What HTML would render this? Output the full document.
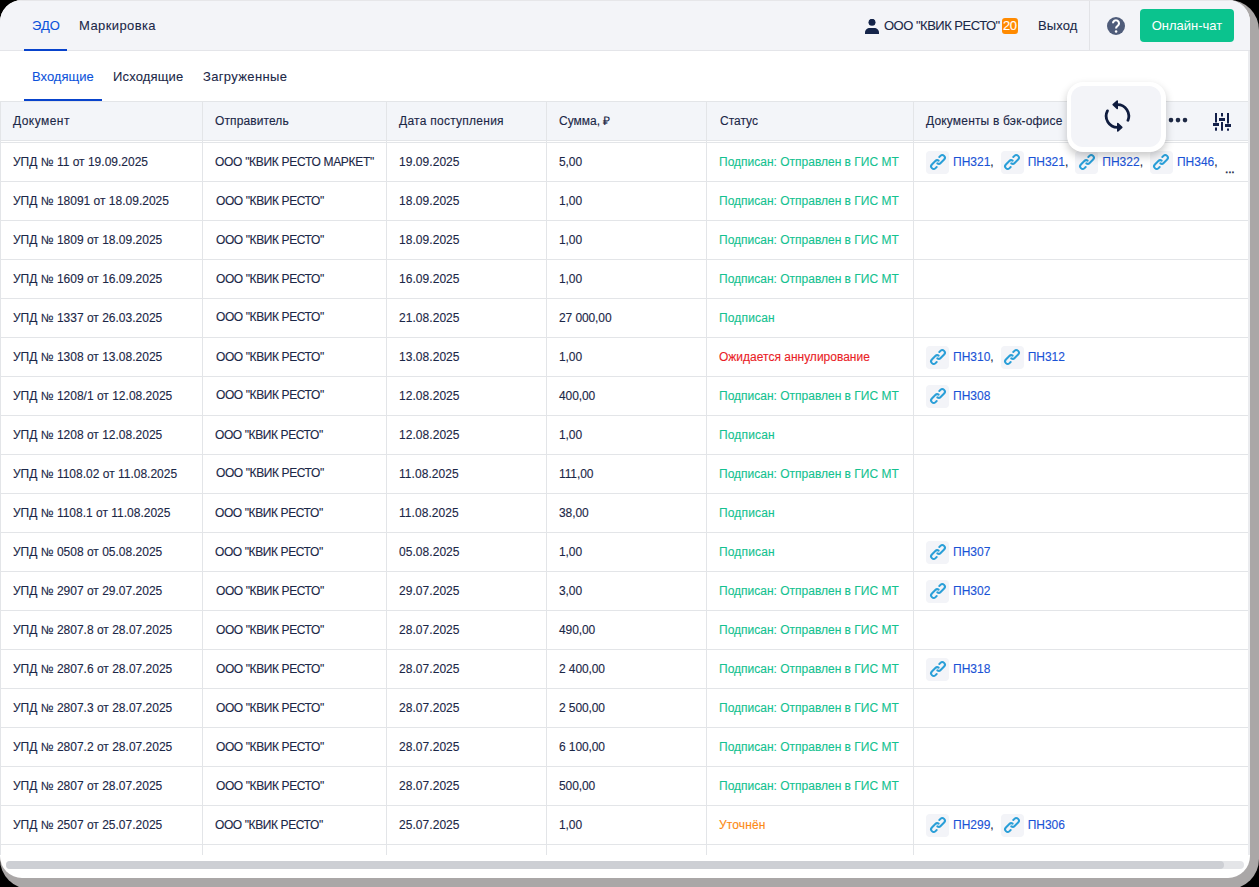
<!DOCTYPE html>
<html><head><meta charset="utf-8">
<style>
*{margin:0;padding:0;box-sizing:border-box}
html,body{width:1259px;height:887px;overflow:hidden;background:#000}
body{font-family:"Liberation Sans",sans-serif;color:#1b2747;position:relative;-webkit-text-stroke:0.12px currentColor}
#shadow{position:absolute;left:0;top:0;width:1259px;height:889px;border-radius:30px;background:#aaa7a7}
#win{position:absolute;left:0;top:0;width:1250px;height:878px;border-radius:22px;overflow:hidden;background:#fff}
#nav{position:absolute;left:0;top:0;width:1250px;height:51px;background:#f3f4f8;border-bottom:1px solid #e4e5e9}
#topline{position:absolute;left:0;top:0;width:1250px;height:1px;background:#e6e6e9}
.t13{position:absolute;font-size:13px;line-height:16px;white-space:nowrap;-webkit-text-stroke:0.08px currentColor}
.ul{position:absolute;height:2px;background:#0843cc}
#divider{position:absolute;left:1089px;top:0;width:1px;height:50px;background:#e2e3e7}
#chat{position:absolute;left:1140px;top:9px;width:94px;height:33px;border-radius:4px;background:#0bc38e;color:#fff;-webkit-text-stroke:0;font-size:13px;line-height:33px;text-align:center}
#badge{position:absolute;left:1002px;top:18px;width:16px;height:16px;border-radius:3px;background:#ff8a00;color:#fff;font-size:13px;line-height:15px;text-align:center;letter-spacing:-0.6px;text-indent:-0.5px}
#tbl{position:absolute;left:0;top:101px;width:1250px;height:760px}
.hbg{position:absolute;left:0;top:1px;width:1250px;height:38px;background:#f3f5f9}
.hl{position:absolute;left:0;width:1248px;height:1px;background:#e3e5e8}
.vl{position:absolute;top:0;width:1px;height:754px;background:#e3e5e8}
.row{position:absolute;left:0;width:1248px;height:39px;border-bottom:1px solid #e3e5e8}
.c{position:absolute;top:0;height:38px;line-height:38px;font-size:12px;white-space:nowrap}
.hc{position:absolute;top:1px;height:38px;line-height:38px;font-size:12px;white-space:nowrap}
.st-g{color:#14c290}
.ls15{letter-spacing:0.15px}
.st-r{color:#ea1d27}
.st-o{color:#fc8a14;letter-spacing:0.15px}
.links{display:flex;align-items:center;height:38px}
.chip{display:inline-flex;align-items:center;margin-right:7px}
.snd{letter-spacing:-0.4px}
.snd1{letter-spacing:-0.3px}
.dt{letter-spacing:0.05px}
.sm{letter-spacing:-0.1px}
.blue{color:#0c52db}
.ib{display:inline-block;width:23px;height:23px;border-radius:4px;background:#f3f4f8;margin-right:4px;padding-left:0.5px}
.ib svg{display:block}
.lt{color:#1a53d6}
.cm{color:#1b2747}
.more{position:absolute;left:299px;top:19px;font-size:12px;line-height:14px;letter-spacing:-0.2px;-webkit-text-stroke:0.4px currentColor}
#sb-track{position:absolute;left:6px;top:861px;width:1238px;height:8px;border-radius:4px;background:#e4e5e8}
#sb-thumb{position:absolute;left:6px;top:861px;width:1218px;height:8px;border-radius:4px;background:#cdcfd4}
#refresh{position:absolute;left:1067px;top:82px;width:99px;height:70px;border-radius:16px;background:#fff;box-shadow:0 4px 9px rgba(0,0,0,0.22)}
#refresh-in{position:absolute;left:4px;top:4px;width:90px;height:61px;border-radius:12px;background:#f3f4f8}
</style></head><body>
<div id="shadow"></div>
<div id="win">
  <div id="nav">
    <div class="t13 blue" style="left:32px;top:18px">ЭДО</div>
    <div class="ul" style="left:24px;top:49px;width:43px"></div>
    <div class="t13" style="left:79px;top:18px;letter-spacing:0.4px">Маркировка</div>
    <svg style="position:absolute;left:864px;top:19px" width="16" height="16" viewBox="0 0 16 16">
      <circle cx="8" cy="3.3" r="3.5" fill="#14244a"/>
      <path d="M1 14.9 v-1.3 c0-2.6 2.2-4.5 4.8-4.5 h4.4 c2.6 0 4.8 1.9 4.8 4.5 v1.3 z" fill="#14244a"/>
    </svg>
    <div class="t13" style="left:884px;top:18px;letter-spacing:-0.5px">ООО "КВИК РЕСТО"</div>
    <div id="badge">20</div>
    <div class="t13" style="left:1038px;top:18px;letter-spacing:0.1px">Выход</div>
    <div id="divider"></div>
    <svg style="position:absolute;left:1107px;top:16.8px" width="18" height="18" viewBox="0 0 18 18">
      <circle cx="9" cy="9" r="9" fill="#4f5c7a"/>
      <path d="M6.0 6.3 A3.0 3.0 0 1 1 10.6 8.8 Q9.1 9.7 9.1 11.2 L9.1 11.6" fill="none" stroke="#fff" stroke-width="2.1" stroke-linecap="butt"/>
      <circle cx="9.1" cy="14.6" r="1.25" fill="#fff"/>
    </svg>
    <div id="chat">Онлайн-чат</div>
    <div id="topline"></div>
  </div>
  <div class="t13 blue" style="left:32px;top:69px">Входящие</div>
  <div class="t13" style="left:113px;top:69px;letter-spacing:0.15px">Исходящие</div>
  <div class="t13" style="left:203px;top:69px;letter-spacing:0.35px">Загруженные</div>
  <div class="ul" style="left:24px;top:99px;width:78px"></div>

  <div id="tbl">
    <div class="hbg"></div>
    <div class="hl" style="top:0"></div>
    <div class="hl" style="top:39px"></div>
    <div class="hl" style="top:41px"></div>
    <div class="hc" style="left:13px;letter-spacing:0.45px">Документ</div>
    <div class="hc" style="left:215px;letter-spacing:0.1px">Отправитель</div>
    <div class="hc" style="left:399px;letter-spacing:0.26px">Дата поступления</div>
    <div class="hc" style="left:559px">Сумма, ₽</div>
    <div class="hc" style="left:720px">Статус</div>
    <div class="hc" style="left:926px;letter-spacing:0.17px">Документы в бэк-офисе</div>
    <svg style="position:absolute;left:1166px;top:14px" width="24" height="12" viewBox="0 0 24 12">
      <circle cx="5" cy="5.1" r="2.3" fill="#1e2945"/><circle cx="12" cy="5.1" r="2.3" fill="#1e2945"/><circle cx="19" cy="5.1" r="2.3" fill="#1e2945"/>
    </svg>
    <svg style="position:absolute;left:1210px;top:10px" width="24" height="22" viewBox="0 0 24 22">
      <g fill="#13204a">
        <rect x="5" y="2" width="2" height="9.5"/><rect x="3" y="12" width="6" height="3"/><rect x="5" y="16.5" width="2" height="3.2"/>
        <rect x="11" y="2" width="2" height="3.5"/><rect x="9" y="7" width="6" height="3"/><rect x="11" y="11" width="2" height="8.7"/>
        <rect x="17" y="2" width="2" height="10.5"/><rect x="15" y="13" width="6" height="3"/><rect x="17" y="17.5" width="2" height="2.2"/>
      </g>
    </svg>
  </div>
  <div id="rows" style="position:absolute;left:0;top:0">
<div class="row" style="top:143px"><div class="c" style="left:13px">УПД № 11 от 19.09.2025</div><div class="c snd1" style="left:215px;top:0px">ООО &quot;КВИК РЕСТО МАРКЕТ&quot;</div><div class="c dt" style="left:399px">19.09.2025</div><div class="c sm" style="left:559px">5,00</div><div class="c st-g" style="left:719px">Подписан: Отправлен в ГИС МТ</div><div class="c links" style="left:926px"><span class="chip"><span class="ib"><svg class="lk" width="22" height="22" viewBox="0 0 22 22"><g transform="translate(6.72 15.28) rotate(-45)" fill="none" stroke="#2a9fd8" stroke-width="2" stroke-linecap="round" stroke-linejoin="round"><path d="M1.6 2.6 L0 2.6 A2.6 2.6 0 0 1 0 -2.6 L4.9 -2.6 A2.6 2.6 0 0 1 7.46 -0.45"/><path d="M10.5 -2.6 L12.1 -2.6 A2.6 2.6 0 0 1 12.1 2.6 L7.199999999999999 2.6 A2.6 2.6 0 0 1 4.64 0.45"/></g></svg></span><span class="lt">ПН321</span><span class="cm">,</span></span><span class="chip"><span class="ib"><svg class="lk" width="22" height="22" viewBox="0 0 22 22"><g transform="translate(6.72 15.28) rotate(-45)" fill="none" stroke="#2a9fd8" stroke-width="2" stroke-linecap="round" stroke-linejoin="round"><path d="M1.6 2.6 L0 2.6 A2.6 2.6 0 0 1 0 -2.6 L4.9 -2.6 A2.6 2.6 0 0 1 7.46 -0.45"/><path d="M10.5 -2.6 L12.1 -2.6 A2.6 2.6 0 0 1 12.1 2.6 L7.199999999999999 2.6 A2.6 2.6 0 0 1 4.64 0.45"/></g></svg></span><span class="lt">ПН321</span><span class="cm">,</span></span><span class="chip"><span class="ib"><svg class="lk" width="22" height="22" viewBox="0 0 22 22"><g transform="translate(6.72 15.28) rotate(-45)" fill="none" stroke="#2a9fd8" stroke-width="2" stroke-linecap="round" stroke-linejoin="round"><path d="M1.6 2.6 L0 2.6 A2.6 2.6 0 0 1 0 -2.6 L4.9 -2.6 A2.6 2.6 0 0 1 7.46 -0.45"/><path d="M10.5 -2.6 L12.1 -2.6 A2.6 2.6 0 0 1 12.1 2.6 L7.199999999999999 2.6 A2.6 2.6 0 0 1 4.64 0.45"/></g></svg></span><span class="lt">ПН322</span><span class="cm">,</span></span><span class="chip"><span class="ib"><svg class="lk" width="22" height="22" viewBox="0 0 22 22"><g transform="translate(6.72 15.28) rotate(-45)" fill="none" stroke="#2a9fd8" stroke-width="2" stroke-linecap="round" stroke-linejoin="round"><path d="M1.6 2.6 L0 2.6 A2.6 2.6 0 0 1 0 -2.6 L4.9 -2.6 A2.6 2.6 0 0 1 7.46 -0.45"/><path d="M10.5 -2.6 L12.1 -2.6 A2.6 2.6 0 0 1 12.1 2.6 L7.199999999999999 2.6 A2.6 2.6 0 0 1 4.64 0.45"/></g></svg></span><span class="lt">ПН346</span><span class="cm">,</span></span><span class="more">...</span></div></div>
<div class="row" style="top:182px"><div class="c" style="left:13px">УПД № 18091 от 18.09.2025</div><div class="c snd" style="left:216px;top:0px">ООО &quot;КВИК РЕСТО&quot;</div><div class="c dt" style="left:399px">18.09.2025</div><div class="c sm" style="left:559px">1,00</div><div class="c st-g" style="left:719px">Подписан: Отправлен в ГИС МТ</div></div>
<div class="row" style="top:221px"><div class="c" style="left:13px">УПД № 1809 от 18.09.2025</div><div class="c snd" style="left:216px;top:0px">ООО &quot;КВИК РЕСТО&quot;</div><div class="c dt" style="left:399px">18.09.2025</div><div class="c sm" style="left:559px">1,00</div><div class="c st-g" style="left:719px">Подписан: Отправлен в ГИС МТ</div></div>
<div class="row" style="top:260px"><div class="c" style="left:13px">УПД № 1609 от 16.09.2025</div><div class="c snd" style="left:216px;top:0px">ООО &quot;КВИК РЕСТО&quot;</div><div class="c dt" style="left:399px">16.09.2025</div><div class="c sm" style="left:559px">1,00</div><div class="c st-g" style="left:719px">Подписан: Отправлен в ГИС МТ</div></div>
<div class="row" style="top:299px"><div class="c" style="left:13px">УПД № 1337 от 26.03.2025</div><div class="c snd" style="left:216px;top:-1px">ООО &quot;КВИК РЕСТО&quot;</div><div class="c dt" style="left:399px">21.08.2025</div><div class="c sm" style="left:559px">27 000,00</div><div class="c st-g ls15" style="left:719px">Подписан</div></div>
<div class="row" style="top:338px"><div class="c" style="left:13px">УПД № 1308 от 13.08.2025</div><div class="c snd" style="left:216px;top:0px">ООО &quot;КВИК РЕСТО&quot;</div><div class="c dt" style="left:399px">13.08.2025</div><div class="c sm" style="left:559px">1,00</div><div class="c st-r" style="left:719px">Ожидается аннулирование</div><div class="c links" style="left:926px"><span class="chip"><span class="ib"><svg class="lk" width="22" height="22" viewBox="0 0 22 22"><g transform="translate(6.72 15.28) rotate(-45)" fill="none" stroke="#2a9fd8" stroke-width="2" stroke-linecap="round" stroke-linejoin="round"><path d="M1.6 2.6 L0 2.6 A2.6 2.6 0 0 1 0 -2.6 L4.9 -2.6 A2.6 2.6 0 0 1 7.46 -0.45"/><path d="M10.5 -2.6 L12.1 -2.6 A2.6 2.6 0 0 1 12.1 2.6 L7.199999999999999 2.6 A2.6 2.6 0 0 1 4.64 0.45"/></g></svg></span><span class="lt">ПН310</span><span class="cm">,</span></span><span class="chip"><span class="ib"><svg class="lk" width="22" height="22" viewBox="0 0 22 22"><g transform="translate(6.72 15.28) rotate(-45)" fill="none" stroke="#2a9fd8" stroke-width="2" stroke-linecap="round" stroke-linejoin="round"><path d="M1.6 2.6 L0 2.6 A2.6 2.6 0 0 1 0 -2.6 L4.9 -2.6 A2.6 2.6 0 0 1 7.46 -0.45"/><path d="M10.5 -2.6 L12.1 -2.6 A2.6 2.6 0 0 1 12.1 2.6 L7.199999999999999 2.6 A2.6 2.6 0 0 1 4.64 0.45"/></g></svg></span><span class="lt">ПН312</span></span></div></div>
<div class="row" style="top:377px"><div class="c" style="left:13px">УПД № 1208/1 от 12.08.2025</div><div class="c snd" style="left:216px;top:-1px">ООО &quot;КВИК РЕСТО&quot;</div><div class="c dt" style="left:399px">12.08.2025</div><div class="c sm" style="left:559px">400,00</div><div class="c st-g" style="left:719px">Подписан: Отправлен в ГИС МТ</div><div class="c links" style="left:926px"><span class="chip"><span class="ib"><svg class="lk" width="22" height="22" viewBox="0 0 22 22"><g transform="translate(6.72 15.28) rotate(-45)" fill="none" stroke="#2a9fd8" stroke-width="2" stroke-linecap="round" stroke-linejoin="round"><path d="M1.6 2.6 L0 2.6 A2.6 2.6 0 0 1 0 -2.6 L4.9 -2.6 A2.6 2.6 0 0 1 7.46 -0.45"/><path d="M10.5 -2.6 L12.1 -2.6 A2.6 2.6 0 0 1 12.1 2.6 L7.199999999999999 2.6 A2.6 2.6 0 0 1 4.64 0.45"/></g></svg></span><span class="lt">ПН308</span></span></div></div>
<div class="row" style="top:416px"><div class="c" style="left:13px">УПД № 1208 от 12.08.2025</div><div class="c snd" style="left:215px;top:0px">ООО &quot;КВИК РЕСТО&quot;</div><div class="c dt" style="left:399px">12.08.2025</div><div class="c sm" style="left:559px">1,00</div><div class="c st-g ls15" style="left:719px">Подписан</div></div>
<div class="row" style="top:455px"><div class="c" style="left:13px">УПД № 1108.02 от 11.08.2025</div><div class="c snd" style="left:216px;top:-1px">ООО &quot;КВИК РЕСТО&quot;</div><div class="c dt" style="left:399px">11.08.2025</div><div class="c sm" style="left:559px">111,00</div><div class="c st-g" style="left:719px">Подписан: Отправлен в ГИС МТ</div></div>
<div class="row" style="top:494px"><div class="c" style="left:13px">УПД № 1108.1 от 11.08.2025</div><div class="c snd" style="left:215px;top:0px">ООО &quot;КВИК РЕСТО&quot;</div><div class="c dt" style="left:399px">11.08.2025</div><div class="c sm" style="left:559px">38,00</div><div class="c st-g ls15" style="left:719px">Подписан</div></div>
<div class="row" style="top:533px"><div class="c" style="left:13px">УПД № 0508 от 05.08.2025</div><div class="c snd" style="left:215px;top:0px">ООО &quot;КВИК РЕСТО&quot;</div><div class="c dt" style="left:399px">05.08.2025</div><div class="c sm" style="left:559px">1,00</div><div class="c st-g ls15" style="left:719px">Подписан</div><div class="c links" style="left:926px"><span class="chip"><span class="ib"><svg class="lk" width="22" height="22" viewBox="0 0 22 22"><g transform="translate(6.72 15.28) rotate(-45)" fill="none" stroke="#2a9fd8" stroke-width="2" stroke-linecap="round" stroke-linejoin="round"><path d="M1.6 2.6 L0 2.6 A2.6 2.6 0 0 1 0 -2.6 L4.9 -2.6 A2.6 2.6 0 0 1 7.46 -0.45"/><path d="M10.5 -2.6 L12.1 -2.6 A2.6 2.6 0 0 1 12.1 2.6 L7.199999999999999 2.6 A2.6 2.6 0 0 1 4.64 0.45"/></g></svg></span><span class="lt">ПН307</span></span></div></div>
<div class="row" style="top:572px"><div class="c" style="left:13px">УПД № 2907 от 29.07.2025</div><div class="c snd" style="left:216px;top:0px">ООО &quot;КВИК РЕСТО&quot;</div><div class="c dt" style="left:399px">29.07.2025</div><div class="c sm" style="left:559px">3,00</div><div class="c st-g" style="left:719px">Подписан: Отправлен в ГИС МТ</div><div class="c links" style="left:926px"><span class="chip"><span class="ib"><svg class="lk" width="22" height="22" viewBox="0 0 22 22"><g transform="translate(6.72 15.28) rotate(-45)" fill="none" stroke="#2a9fd8" stroke-width="2" stroke-linecap="round" stroke-linejoin="round"><path d="M1.6 2.6 L0 2.6 A2.6 2.6 0 0 1 0 -2.6 L4.9 -2.6 A2.6 2.6 0 0 1 7.46 -0.45"/><path d="M10.5 -2.6 L12.1 -2.6 A2.6 2.6 0 0 1 12.1 2.6 L7.199999999999999 2.6 A2.6 2.6 0 0 1 4.64 0.45"/></g></svg></span><span class="lt">ПН302</span></span></div></div>
<div class="row" style="top:611px"><div class="c" style="left:13px">УПД № 2807.8 от 28.07.2025</div><div class="c snd" style="left:216px;top:0px">ООО &quot;КВИК РЕСТО&quot;</div><div class="c dt" style="left:399px">28.07.2025</div><div class="c sm" style="left:559px">490,00</div><div class="c st-g" style="left:719px">Подписан: Отправлен в ГИС МТ</div></div>
<div class="row" style="top:650px"><div class="c" style="left:13px">УПД № 2807.6 от 28.07.2025</div><div class="c snd" style="left:216px;top:0px">ООО &quot;КВИК РЕСТО&quot;</div><div class="c dt" style="left:399px">28.07.2025</div><div class="c sm" style="left:559px">2 400,00</div><div class="c st-g" style="left:719px">Подписан: Отправлен в ГИС МТ</div><div class="c links" style="left:926px"><span class="chip"><span class="ib"><svg class="lk" width="22" height="22" viewBox="0 0 22 22"><g transform="translate(6.72 15.28) rotate(-45)" fill="none" stroke="#2a9fd8" stroke-width="2" stroke-linecap="round" stroke-linejoin="round"><path d="M1.6 2.6 L0 2.6 A2.6 2.6 0 0 1 0 -2.6 L4.9 -2.6 A2.6 2.6 0 0 1 7.46 -0.45"/><path d="M10.5 -2.6 L12.1 -2.6 A2.6 2.6 0 0 1 12.1 2.6 L7.199999999999999 2.6 A2.6 2.6 0 0 1 4.64 0.45"/></g></svg></span><span class="lt">ПН318</span></span></div></div>
<div class="row" style="top:689px"><div class="c" style="left:13px">УПД № 2807.3 от 28.07.2025</div><div class="c snd" style="left:216px;top:0px">ООО &quot;КВИК РЕСТО&quot;</div><div class="c dt" style="left:399px">28.07.2025</div><div class="c sm" style="left:559px">2 500,00</div><div class="c st-g" style="left:719px">Подписан: Отправлен в ГИС МТ</div></div>
<div class="row" style="top:728px"><div class="c" style="left:13px">УПД № 2807.2 от 28.07.2025</div><div class="c snd" style="left:216px;top:0px">ООО &quot;КВИК РЕСТО&quot;</div><div class="c dt" style="left:399px">28.07.2025</div><div class="c sm" style="left:559px">6 100,00</div><div class="c st-g" style="left:719px">Подписан: Отправлен в ГИС МТ</div></div>
<div class="row" style="top:767px"><div class="c" style="left:13px">УПД № 2807 от 28.07.2025</div><div class="c snd" style="left:216px;top:0px">ООО &quot;КВИК РЕСТО&quot;</div><div class="c dt" style="left:399px">28.07.2025</div><div class="c sm" style="left:559px">500,00</div><div class="c st-g" style="left:719px">Подписан: Отправлен в ГИС МТ</div></div>
<div class="row" style="top:806px"><div class="c" style="left:13px">УПД № 2507 от 25.07.2025</div><div class="c snd" style="left:215px;top:0px">ООО &quot;КВИК РЕСТО&quot;</div><div class="c dt" style="left:399px">25.07.2025</div><div class="c sm" style="left:559px">1,00</div><div class="c st-o" style="left:719px">Уточнён</div><div class="c links" style="left:926px"><span class="chip"><span class="ib"><svg class="lk" width="22" height="22" viewBox="0 0 22 22"><g transform="translate(6.72 15.28) rotate(-45)" fill="none" stroke="#2a9fd8" stroke-width="2" stroke-linecap="round" stroke-linejoin="round"><path d="M1.6 2.6 L0 2.6 A2.6 2.6 0 0 1 0 -2.6 L4.9 -2.6 A2.6 2.6 0 0 1 7.46 -0.45"/><path d="M10.5 -2.6 L12.1 -2.6 A2.6 2.6 0 0 1 12.1 2.6 L7.199999999999999 2.6 A2.6 2.6 0 0 1 4.64 0.45"/></g></svg></span><span class="lt">ПН299</span><span class="cm">,</span></span><span class="chip"><span class="ib"><svg class="lk" width="22" height="22" viewBox="0 0 22 22"><g transform="translate(6.72 15.28) rotate(-45)" fill="none" stroke="#2a9fd8" stroke-width="2" stroke-linecap="round" stroke-linejoin="round"><path d="M1.6 2.6 L0 2.6 A2.6 2.6 0 0 1 0 -2.6 L4.9 -2.6 A2.6 2.6 0 0 1 7.46 -0.45"/><path d="M10.5 -2.6 L12.1 -2.6 A2.6 2.6 0 0 1 12.1 2.6 L7.199999999999999 2.6 A2.6 2.6 0 0 1 4.64 0.45"/></g></svg></span><span class="lt">ПН306</span></span></div></div>
  </div>
  <div class="vl" style="left:0;top:101px"></div>
  <div class="vl" style="left:202px;top:101px"></div>
  <div class="vl" style="left:386px;top:101px"></div>
  <div class="vl" style="left:546px;top:101px"></div>
  <div class="vl" style="left:706px;top:101px"></div>
  <div class="vl" style="left:913px;top:101px"></div>
  <div class="vl" style="left:1248px;top:51px;height:804px;width:2px;background:#ebecef"></div>
  <div id="sb-track"></div>
  <div id="sb-thumb"></div>
  <div id="refresh"><div id="refresh-in"></div>
    <svg style="position:absolute;left:36px;top:16px" width="28" height="36" viewBox="0 0 28 36">
      <g fill="none" stroke="#0f1c3f" stroke-width="2.8" stroke-linecap="round" stroke-linejoin="round">
        <path d="M13 6.7 L14.5 6.7 A11.3 11.3 0 0 1 24.98 22.23"/>
        <path d="M14.2 3.0 L10.2 6.7 L14.2 10.4 Z" fill="#0f1c3f" stroke-width="1.6"/>
        <path d="M4.43 12.87 A11.3 11.3 0 0 0 14.5 29.3 L16 29.3"/>
        <path d="M14.8 25.6 L18.8 29.3 L14.8 33.0 Z" fill="#0f1c3f" stroke-width="1.6"/>
      </g>
    </svg>
  </div>
</div>
</body></html>
